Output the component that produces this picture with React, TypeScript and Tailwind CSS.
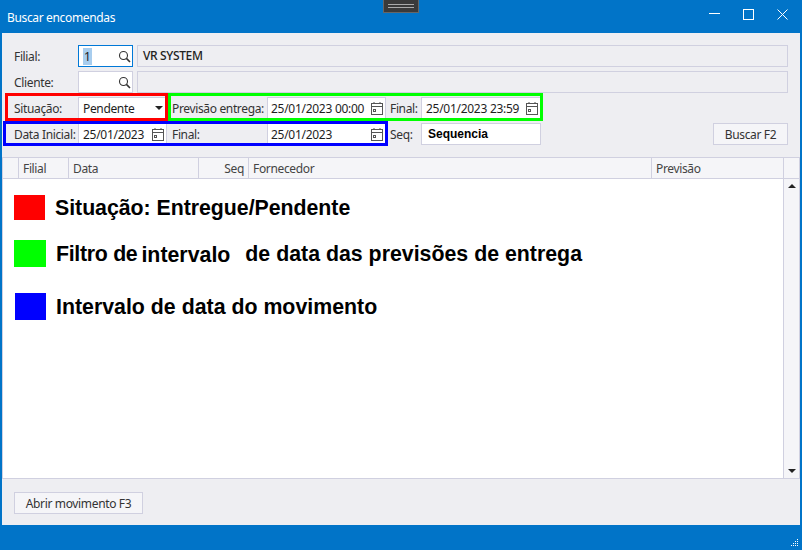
import React from "react";

const ui = "font-['Noto_Sans','Open_Sans',sans-serif] text-[12px] tracking-[-0.35px] text-[#1e1e1e]";

function Search() {
  return (
    <svg width="13" height="13" viewBox="0 0 13 13" fill="none" stroke="#333" className="shrink-0">
      <circle cx="5.5" cy="5.5" r="4" strokeWidth="1.1" />
      <path d="M8.4 8.4 L12 12" strokeWidth="1.6" />
    </svg>
  );
}

function Calendar() {
  return (
    <svg width="12" height="13" viewBox="0 0 12 13" fill="none" stroke="#555" className="shrink-0">
      <rect x="0.5" y="1.5" width="11" height="11" />
      <path d="M0.5 4.5 H11.5 M3 0 V2 M9 0 V2" />
      <rect x="2.5" y="7.5" width="2" height="2" />
    </svg>
  );
}

function DateField({ value, w }: { value: string; w: string }) {
  return (
    <div className={`${w} h-[22px] bg-white border border-[#d0d0e0] flex items-center justify-between pr-[2px] shrink-0`}>
      <span className="whitespace-nowrap pt-px tracking-[-0.28px]">{value}</span>
      <Calendar />
    </div>
  );
}

function Label({ text, w }: { text: string; w: string }) {
  return <div className={`${w} shrink-0 whitespace-nowrap text-[#333] pt-[2px]`}>{text}</div>;
}

function Head({ w, text, right }: { w: string; text?: string; right?: boolean }) {
  return (
    <div className={`${w} h-full border-r border-[#d0d0e0] px-[4px] pt-[2px] flex items-center shrink-0 text-[#444] ${right ? "justify-end" : ""}`}>
      {text}
    </div>
  );
}

function LegendText({ children, className = "" }: { children: React.ReactNode; className?: string }) {
  return (
    <div className={`font-['Liberation_Sans',Arial,sans-serif] font-bold text-[21.33px] leading-none text-black whitespace-nowrap ${className}`}>
      {children}
    </div>
  );
}

export default function App() {
  return (
    <div className={`${ui} relative w-[802px] h-[550px] bg-[#0174c8] flex flex-col overflow-hidden`}>
      {/* Title bar */}
      <div className="h-[33px] shrink-0 flex items-center justify-between pl-[7px] text-white">
        <span className="pt-[3px]">Buscar encomendas</span>
        <div className="flex items-center pr-[14px] gap-[23px] pb-[5px]">
          <svg width="11" height="11" viewBox="0 0 11 11" stroke="white" fill="none"><path d="M0 4.5 H11" /></svg>
          <svg width="11" height="11" viewBox="0 0 11 11" stroke="white" fill="none"><rect x="0.5" y="0.5" width="10" height="10" /></svg>
          <svg width="11" height="11" viewBox="0 0 11 11" stroke="white" fill="none"><path d="M0.5 0.5 L10.5 10.5 M10.5 0.5 L0.5 10.5" /></svg>
        </div>
      </div>

      {/* Handle at the top */}
      <div className="absolute left-[383px] top-0 w-[36px] h-[13px] bg-[#3a3a3a] border border-[#666] border-t-0 flex flex-col items-center justify-center gap-[2px]">
        <div className="w-[26px] h-px bg-[#aaa]" />
        <div className="w-[26px] h-px bg-[#aaa]" />
      </div>

      {/* Window body */}
      <div className="h-[492px] shrink-0 ml-[2px] mr-[2px] bg-[#eeeef2] flex flex-col">
        <div className="pt-[12px] pl-[12px] pr-[12px] flex flex-col gap-[4px] h-[124px] shrink-0">
          <div className="flex items-center h-[22px]">
            <Label text="Filial:" w="w-[64px]" />
            <div className="w-[55px] h-[22px] bg-white border border-[#0078d7] flex items-center justify-between pl-[4px] pr-[1px] shrink-0">
              <span className="bg-[#a8cdee] px-[1px] leading-[16px] pt-px">1</span>
              <Search />
            </div>
            <div className="ml-[4px] flex-1 h-[22px] border border-[#d0d0e0] flex items-center pl-[5px] text-[#222] font-medium">VR SYSTEM</div>
          </div>
          <div className="flex items-center h-[22px]">
            <Label text="Cliente:" w="w-[64px]" />
            <div className="w-[55px] h-[22px] bg-white border border-[#d0d0e0] flex items-center justify-end pr-[1px] shrink-0">
              <Search />
            </div>
            <div className="ml-[4px] flex-1 h-[22px] border border-[#d0d0e0]" />
          </div>
          <div className="flex items-center h-[22px]">
            <Label text="Situação:" w="w-[64px]" />
            <div className="w-[89px] h-[22px] bg-white border border-[#d0d0e0] flex items-center justify-between pl-[4px] pr-[3px] shrink-0">
              <span className="pt-px">Pendente</span>
              <div className="w-0 h-0 border-x-[4px] border-x-transparent border-t-[4px] border-t-[#222]" />
            </div>
            <Label text="Previsão entrega:" w="ml-[5px] w-[95px]" />
            <DateField value="25/01/2023 00:00" w="w-[119px] pl-[3px]" />
            <Label text="Final:" w="ml-[4px] w-[31px]" />
            <DateField value="25/01/2023 23:59" w="w-[120px] pl-[4px]" />
          </div>
          <div className="flex items-center h-[22px]">
            <Label text="Data Inicial:" w="w-[64px]" />
            <DateField value="25/01/2023" w="w-[89px] pl-[4px]" />
            <Label text="Final:" w="ml-[5px] w-[95px]" />
            <DateField value="25/01/2023" w="w-[119px] pl-[3px]" />
            <Label text="Seq:" w="ml-[4px] w-[31px]" />
            <div className="w-[120px] h-[22px] bg-white border border-[#d0d0e0] flex items-center pl-[6px] shrink-0 font-['Liberation_Sans',Arial,sans-serif] font-bold text-black tracking-normal">
              Sequencia
            </div>
            <div className="ml-auto w-[75px] h-[22px] bg-[#f5f5f8] border border-[#d0d0e0] flex items-center justify-center text-[#333] pt-px">
              Buscar F2
            </div>
          </div>
        </div>

        {/* Grid */}
        <div className="h-[322px] shrink-0 border border-[#d0d0e0] flex flex-col">
          <div className="h-[21px] shrink-0 bg-[#f5f5f8] border-b border-[#d0d0e0] flex">
            <Head w="w-[16px]" />
            <Head w="w-[50px]" text="Filial" />
            <Head w="w-[130px]" text="Data" />
            <Head w="w-[50px]" text="Seq" right />
            <Head w="w-[403px]" text="Fornecedor" />
            <Head w="w-[132px]" text="Previsão" />
            <div className="flex-1" />
          </div>
          <div className="flex-1 flex min-h-0">
            <div className="flex-1 bg-white flex flex-col pl-[11px] pt-[16px]">
              <div className="flex items-center h-[25px]">
                <div className="w-[31px] h-[25px] bg-[#ff0000] shrink-0" />
                <LegendText className="ml-[10px] tracking-[-0.04px] pt-[3px]">Situação: Entregue/Pendente</LegendText>
              </div>
              <div className="flex items-center h-[27px] mt-[20px]">
                <div className="w-[32px] h-[27px] bg-[#00ff00] shrink-0" />
                <LegendText className="ml-[10px] tracking-[-0.3px] pt-[3px]">Filtro de</LegendText>
                <LegendText className="ml-[4px] tracking-normal pt-[5px] !font-semibold">intervalo</LegendText>
                <LegendText className="ml-[15px] tracking-normal pt-[3px]">de data das previsões de entrega</LegendText>
              </div>
              <div className="flex items-center h-[27px] mt-[26px] ml-px">
                <div className="w-[31px] h-[27px] bg-[#0000ff] shrink-0" />
                <LegendText className="ml-[10px] tracking-normal pt-[3px]">Intervalo de data do movimento</LegendText>
              </div>
            </div>
            <div className="w-[16px] shrink-0 bg-[#f5f5f8] border-l border-[#d0d0e0] flex flex-col items-center justify-between py-[5px]">
              <div className="w-0 h-0 border-x-[4px] border-x-transparent border-b-[4px] border-b-[#222]" />
              <div className="w-0 h-0 border-x-[4px] border-x-transparent border-t-[4px] border-t-[#222]" />
            </div>
          </div>
        </div>

        <div className="flex-1 pl-[12px] pt-[13px]">
          <div className="w-[129px] h-[22px] bg-[#f5f5f8] border border-[#d0d0e0] flex items-center justify-center text-[#333] pt-px">
            Abrir movimento F3
          </div>
        </div>
      </div>

      {/* Resize grip */}
      <svg className="absolute right-[3px] bottom-[3px]" width="8" height="8" viewBox="0 0 8 8" fill="white">
        <rect x="6" y="0" width="1" height="1" /><rect x="4" y="2" width="1" height="1" /><rect x="6" y="2" width="1" height="1" />
        <rect x="2" y="4" width="1" height="1" /><rect x="4" y="4" width="1" height="1" /><rect x="6" y="4" width="1" height="1" />
        <rect x="0" y="6" width="1" height="1" /><rect x="2" y="6" width="1" height="1" /><rect x="4" y="6" width="1" height="1" /><rect x="6" y="6" width="1" height="1" />
      </svg>

      {/* Annotation rectangles drawn over the form */}
      <div className="absolute left-[5px] top-[93px] w-[163px] h-[28px] border-[3px] border-[#ff0000]" />
      <div className="absolute left-[168px] top-[93px] w-[375px] h-[28px] border-[3px] border-[#00ff00]" />
      <div className="absolute left-[3px] top-[121px] w-[385px] h-[25px] border-[3px] border-[#0000ff]" />
    </div>
  );
}
